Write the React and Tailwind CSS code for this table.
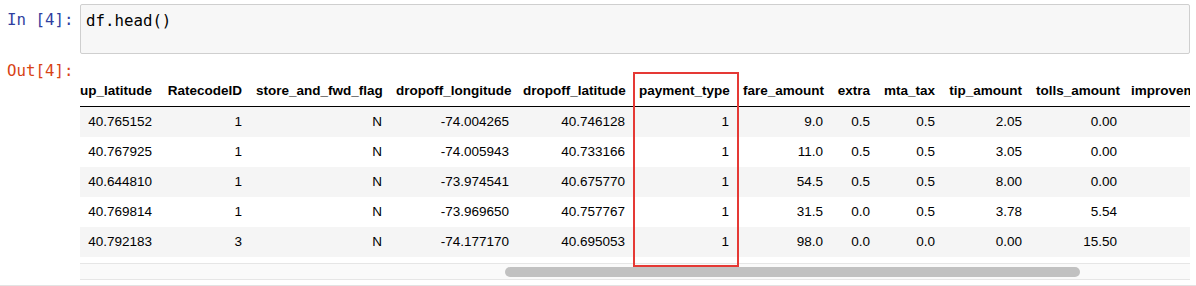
const columns = [
  { name: 'pickup_latitude', w: 'w-[114px]' },
  { name: 'RatecodeID', w: 'w-[90px]' },
  { name: 'store_and_fwd_flag', w: 'w-[140px]' },
  { name: 'dropoff_longitude', w: 'w-[127px]' },
  { name: 'dropoff_latitude', w: 'w-[116px]' },
  { name: 'payment_type', w: 'w-[104px]' },
  { name: 'fare_amount', w: 'w-[94px]' },
  { name: 'extra', w: 'w-[47px]' },
  { name: 'mta_tax', w: 'w-[65px]' },
  { name: 'tip_amount', w: 'w-[87px]' },
  { name: 'tolls_amount', w: 'w-[95px]' },
  { name: 'improvement_surcharge', w: 'w-[171px]' },
]

const rows = [
  ['40.765152', '1', 'N', '-74.004265', '40.746128', '1', '9.0', '0.5', '0.5', '2.05', '0.00', '0.3'],
  ['40.767925', '1', 'N', '-74.005943', '40.733166', '1', '11.0', '0.5', '0.5', '3.05', '0.00', '0.3'],
  ['40.644810', '1', 'N', '-73.974541', '40.675770', '1', '54.5', '0.5', '0.5', '8.00', '0.00', '0.3'],
  ['40.769814', '1', 'N', '-73.969650', '40.757767', '1', '31.5', '0.0', '0.5', '3.78', '5.54', '0.3'],
  ['40.792183', '3', 'N', '-74.177170', '40.695053', '1', '98.0', '0.0', '0.0', '0.00', '15.50', '0.3'],
]

const mono = "font-['DejaVu_Sans_Mono','Liberation_Mono',monospace] text-[15.75px] leading-[20px]"

/**
 * Notebook cell: df.head() with its dataframe output
 */
export default function App() {
  return (
    <div className="w-[1196px] h-[286px] bg-white overflow-hidden pt-[4px]">
      {/* input cell */}
      <div className="flex">
        <div className={`w-[80px] shrink-0 pl-[7px] pt-[6px] text-[#303F9F] ${mono}`}>
          In&nbsp;[4]:
        </div>
        <div
          className={`flex-1 min-w-0 mr-[6px] h-[50px] rounded-[2px] border border-[#cfcfcf] bg-[#f7f7f7] px-[5px] pt-[6px] text-black ${mono}`}
        >
          df.head()
        </div>
      </div>

      {/* output cell */}
      <div className="flex">
        <div className={`w-[80px] shrink-0 pl-[7px] pt-[7px] text-[#D84315] ${mono}`}>
          Out[4]:
        </div>
        <div className="relative flex-1 min-w-0 mr-[6px] pt-[22px]">
          <div className="overflow-hidden">
            <table className="-ml-[35px] w-[1250px] table-fixed border-separate border-spacing-0 text-[13.5px] font-['Liberation_Sans',Arial,sans-serif] text-black whitespace-nowrap">
              <thead>
                <tr>
                  {columns.map((c) => (
                    <th
                      key={c.name}
                      className={`${c.w} px-[7px] py-0 leading-[30px] text-right font-bold border-b border-black overflow-hidden`}
                    >
                      {c.name}
                    </th>
                  ))}
                </tr>
              </thead>
              <tbody>
                {rows.map((r, i) => (
                  <tr key={i} className={i % 2 === 0 ? 'bg-[#f5f5f5]' : 'bg-white'}>
                    {r.map((v, j) => (
                      <td key={j} className="px-[7px] py-0 leading-[30px] text-right">
                        {v}
                      </td>
                    ))}
                  </tr>
                ))}
              </tbody>
            </table>
          </div>

          {/* horizontal scrollbar */}
          <div className="mt-[6px] h-[17px] border-y border-[#e6e6e6] bg-[#fafafa] pt-[3px]">
            <div className="ml-[425px] w-[575px] h-[10px] rounded-full bg-[#c1c1c1]" />
          </div>

          {/* highlight around payment_type */}
          <div className="absolute left-[553px] top-[18px] w-[106px] h-[195px] border-2 border-[#e53935]" />
        </div>
      </div>

      <div className="mt-[5px] border-t border-[#e3e3e3]" />
    </div>
  )
}
